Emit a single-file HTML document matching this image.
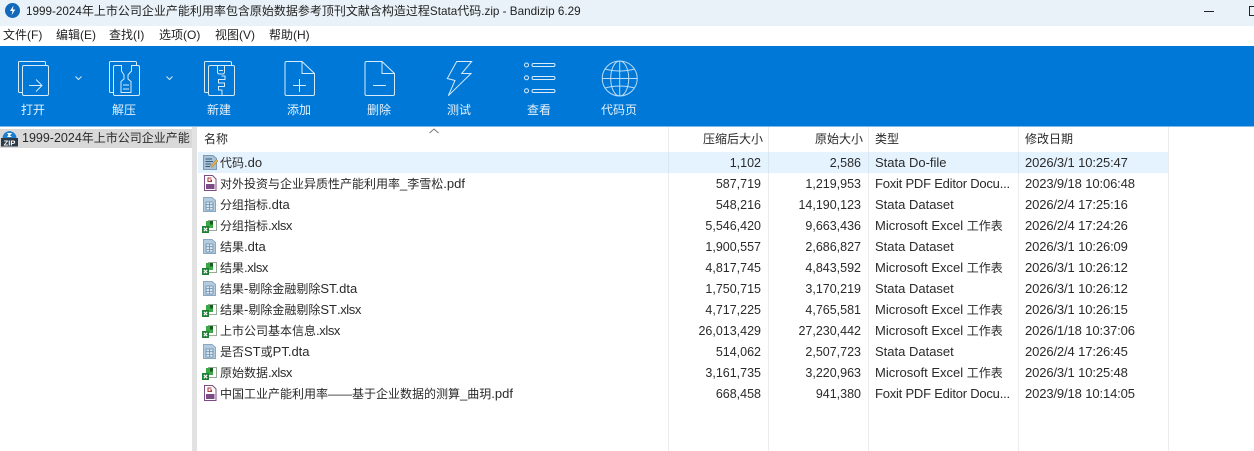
<!DOCTYPE html>
<html lang="zh"><head><meta charset="utf-8"><title>Bandizip</title>
<style>
html,body{margin:0;padding:0;background:#fff}
body{width:1254px;height:451px;overflow:hidden;position:relative;font-family:"Liberation Sans","Noto Sans CJK SC",sans-serif;font-size:13px;color:#2a2a2a}
.a{position:absolute;white-space:nowrap;line-height:18px}
.r{text-align:right}
.m{top:26px;font-size:12px;color:#222}
.t{color:#e4f1fb;top:101px;font-size:12px;text-align:center;width:70px}
.h{top:130px;font-size:12px}
i{font-style:normal;font-size:12px}
u{text-decoration:none;font-size:11.7px}
s{text-decoration:none;letter-spacing:-.4px}
.n{font-size:12.5px;width:92px;text-align:right}
.d{font-size:13px;letter-spacing:-.12px;left:1025px}
.f{letter-spacing:-.22px}
.y{left:875px}
.q{left:220px}
svg{position:absolute;overflow:visible}
.w{fill:none;stroke:#d8ebf9;stroke-width:1}
.vl{position:absolute;top:127px;height:324px;width:1px;background:#ececec}
</style></head><body>
<svg width="0" height="0" style="position:absolute"><defs>
<g id="do"><path d="M.5 .5H10L13.500 3.500V14.500H.5Z" fill="#a9c2d8" stroke="#7d9ab5"/><path d="M2.500 4H9M2.500 6.500H10M2.500 9H8M2.500 11.500H7" stroke="#35597a"/><path d="M7.500 11L13.500 4.500L15 6L9 12.500Z" fill="#e6b04c" stroke="#8f7330" stroke-width=".5"/></g>
<g id="pdf"><path d="M.5 .5H8.500L12 4V15.500H.5Z" fill="#fff" stroke="#7c4a84"/><path d="M7.500 3H4V6.500H7.500V5H6" fill="none" stroke="#a83a3a" stroke-width="1.100"/><rect x="2" y="9" width="8.500" height="5" fill="#7c4a84"/></g>
<g id="dta"><path d="M.5 .5H9L12.500 3.500V14.500H.5Z" fill="#b5cbdf" stroke="#8ba8c2"/><path d="M3 5H10V13H3ZM3 7.700H10M3 10.400H10M6.500 5V13" fill="#dbe7f1" stroke="#6a8fae" stroke-width=".8"/></g>
<g id="xl"><rect x="6.500" y="1.500" width="8" height="10" fill="#fff" stroke="#9aa89a"/><rect x="4" y="2" width="7" height="7" fill="#3aa845"/><path d="M8 2H11V5.500H8Z" fill="#145c1f"/><rect x="0" y="7" width="7" height="7" fill="#1e7e34"/><path d="M1.800 8.800L5.200 12.200M5.200 8.800L1.800 12.200" stroke="#fff" stroke-width="1.100"/></g>
</defs></svg>

<!-- Title bar -->
<div class="a" style="left:0;top:0;width:1254px;height:26px;background:#e9f2f8"></div>
<svg style="left:5px;top:3px" width="15" height="15" viewBox="0 0 15 15"><circle cx="7.500" cy="7.500" r="7.500" fill="#1268bd"/><path d="M8.500 2.500L5 8H7.500L6.500 12.500L10.300 6.500H7.800Z" fill="#fff"/></svg>
<div class="a" style="left:26px;top:2px;font-size:12px;color:#222"><u>1999-2024</u>年上市公司企业产能利用率包含原始数据参考顶刊文献含构造过程<u>Stata</u>代码<u>.zip - Bandizip 6.29</u></div>
<div class="a" style="left:1204px;top:11px;width:10px;height:1px;background:#222"></div>
<div class="a" style="left:1249px;top:6px;width:8px;height:8px;border:1px solid #222"></div>

<!-- Menu -->
<div class="a m" style="left:3px">文件(F)</div>
<div class="a m" style="left:56px">编辑(E)</div>
<div class="a m" style="left:109px">查找(I)</div>
<div class="a m" style="left:159px">选项(O)</div>
<div class="a m" style="left:215px">视图(V)</div>
<div class="a m" style="left:269px">帮助(H)</div>

<!-- Toolbar -->
<div class="a" style="left:0;top:46px;width:1254px;height:80px;background:#0078d7"></div>
<div class="a" style="left:0;top:126px;width:1254px;height:1px;background:#7fb9e8"></div>

<svg style="left:0;top:0" width="1254" height="127" viewBox="0 0 1254 127" class="w">
<!-- open -->
<path d="M22.500 92.500H19.500Q18.500 92.500 18.500 91.500V62.500Q18.500 61.500 19.500 61.500H44Q45.500 61.500 45.500 62.500V65.500"/>
<rect x="22.500" y="65.500" width="26" height="30" rx="1.500"/>
<path d="M29 85.500H42M36 79.500L42 85.500L36 91.500"/>
<path d="M75.500 76.500L78.500 79.500L81.500 76.500"/>
<!-- extract -->
<path d="M113.500 92.500H110.500Q109.500 92.500 109.500 91.500V62.500Q109.500 61.500 110.500 61.500H135Q136.500 61.500 136.500 62.500V65.500"/>
<path d="M121.500 65.500H115Q113.500 65.500 113.500 67V94Q113.500 95.500 115 95.500H138Q139.500 95.500 139.500 94V67Q139.500 65.500 138 65.500H131.500V71L128 75V79L131 81.500V92.500H121V81.500L124 79V75L121.500 71Z"/>
<path d="M123 85H129M123 89H129"/>
<path d="M166.500 76.500L169.500 79.500L172.500 76.500"/>
<!-- new -->
<path d="M208.500 92.500H205.500Q204.500 92.500 204.500 91.500V62.500Q204.500 61.500 205.500 61.500H230Q231.500 61.500 231.500 62.500V65.500"/>
<rect x="208.500" y="65.500" width="26" height="30" rx="1.500"/>
<path d="M217.500 65.500V72Q217.500 74 219.500 74H222.500Q224.500 74 224.500 72V65.500M219 70.500H223M221.500 76H225V79.500H218.500V83H224.500V86.500H218.500V90H222V95"/>
<!-- add -->
<path d="M286.500 61.500H302L314.500 73.500V94Q314.500 95.500 313 95.500H286.500Q285 95.500 285 94V63Q285 61.500 286.500 61.500ZM302 61.500V73.500H314.500"/>
<path d="M293 85.500H306M299.500 79V92"/>
<!-- delete -->
<path d="M366.500 61.500H382L394.500 73.500V94Q394.500 95.500 393 95.500H366.500Q365 95.500 365 94V63Q365 61.500 366.500 61.500ZM382 61.500V73.500H394.500"/>
<path d="M373 85.500H386"/>
<!-- test -->
<path d="M456.700 61.500H471.700L461.700 73.500H471L448.300 95.700L455 80.500L447.300 78.500Z"/>
<!-- view -->
<circle cx="526.500" cy="65" r="2"/><circle cx="526.500" cy="77.800" r="2"/><circle cx="526.500" cy="90.800" r="2"/>
<rect x="532" y="63.500" width="23" height="3" rx="1.500"/><rect x="532" y="76.500" width="23" height="3" rx="1.500"/><rect x="532" y="89.500" width="23" height="3" rx="1.500"/>
<!-- codepage -->
<g stroke="#b9dcf6"><circle cx="619.700" cy="78.500" r="17.500"/><ellipse cx="619.700" cy="78.500" rx="9" ry="17.500"/><path d="M619.700 61V96M602.200 78.500H637.200M605 69Q619.700 73 634.500 69M605 88Q619.700 84 634.500 88"/></g>
</svg>

<div class="a t" style="left:-2px">打开</div>
<div class="a t" style="left:89px">解压</div>
<div class="a t" style="left:184px">新建</div>
<div class="a t" style="left:264px">添加</div>
<div class="a t" style="left:344px">删除</div>
<div class="a t" style="left:424px">测试</div>
<div class="a t" style="left:504px">查看</div>
<div class="a t" style="left:584px">代码页</div>

<!-- Sidebar -->
<div class="a" style="left:0;top:129px;width:192px;height:19px;background:#d9d9d9"></div>
<div class="a" style="left:192px;top:127px;width:5px;height:324px;background:#e2e2e2"></div>
<svg style="left:1px;top:130px" width="17" height="17" viewBox="0 0 17 17"><path d="M1.500 8Q2 2 8.500 1Q15 2 15.500 8Z" fill="#1b7fd0"/><path d="M6 3H11L9 5.500L11 7H6L7.500 5Z" fill="#fff"/><rect x="0" y="8" width="17" height="8.500" fill="#2c3a48"/><text x="8.500" y="15.300" font-size="7.500" font-weight="bold" fill="#fff" text-anchor="middle" font-family="Liberation Sans">ZIP</text></svg>
<div class="a" style="left:22px;top:129px;width:169px;overflow:hidden;font-size:12.5px">1999-2024<i>年上市公司企业产能</i></div>

<!-- Header -->
<div class="vl" style="left:668px"></div>
<div class="vl" style="left:768px"></div>
<div class="vl" style="left:868px"></div>
<div class="vl" style="left:1018px"></div>
<div class="vl" style="left:1168px"></div>
<div class="a h" style="left:204px">名称</div>
<svg style="left:429px;top:128px" width="11" height="6"><path d="M.5 5L5 1L9.500 5" fill="none" stroke="#777"/></svg>
<div class="a r h" style="left:669px;width:94px">压缩后大小</div>
<div class="a r h" style="left:769px;width:94px">原始大小</div>
<div class="a h" style="left:875px">类型</div>
<div class="a h" style="left:1025px">修改日期</div>

<div class="a" style="left:198px;top:152px;width:970px;height:21px;background:#e5f3ff"></div>
<div class="vl" style="left:668px;top:152px;height:21px;background:#d8e6f2"></div>
<div class="vl" style="left:768px;top:152px;height:21px;background:#d8e6f2"></div>
<div class="vl" style="left:868px;top:152px;height:21px;background:#d8e6f2"></div>
<div class="vl" style="left:1018px;top:152px;height:21px;background:#d8e6f2"></div>

<!-- Row 1 -->
<svg style="left:203px;top:155px" width="17" height="17"><use href="#do"/></svg>
<div class="a q" style="top:154px"><i>代码</i>.do</div><div class="a n" style="left:669px;top:154px">1,102</div><div class="a n" style="left:769px;top:154px">2,586</div><div class="a y" style="top:154px">Stata Do-file</div><div class="a d" style="top:154px">2026/3/1 10:25:47</div>
<!-- Row 2 -->
<svg style="left:204px;top:175px" width="17" height="17"><use href="#pdf"/></svg>
<div class="a q" style="top:175px"><i>对外投资与企业异质性产能利用率</i>_<i>李雪松</i>.pdf</div><div class="a n" style="left:669px;top:175px">587,719</div><div class="a n" style="left:769px;top:175px">1,219,953</div><div class="a y f" style="top:175px">Foxit PDF Editor Docu...</div><div class="a d" style="top:175px">2023/9/18 10:06:48</div>
<!-- Row 3 -->
<svg style="left:203px;top:197px" width="17" height="17"><use href="#dta"/></svg>
<div class="a q" style="top:196px"><i>分组指标</i>.dta</div><div class="a n" style="left:669px;top:196px">548,216</div><div class="a n" style="left:769px;top:196px">14,190,123</div><div class="a y" style="top:196px">Stata Dataset</div><div class="a d" style="top:196px">2026/2/4 17:25:16</div>
<!-- Row 4 -->
<svg style="left:202px;top:219px" width="17" height="17"><use href="#xl"/></svg>
<div class="a q" style="top:217px"><i>分组指标</i><s>.xlsx</s></div><div class="a n" style="left:669px;top:217px">5,546,420</div><div class="a n" style="left:769px;top:217px">9,663,436</div><div class="a y" style="top:217px">Microsoft Excel <i>工作表</i></div><div class="a d" style="top:217px">2026/2/4 17:24:26</div>
<!-- Row 5 -->
<svg style="left:203px;top:239px" width="17" height="17"><use href="#dta"/></svg>
<div class="a q" style="top:238px"><i>结果</i>.dta</div><div class="a n" style="left:669px;top:238px">1,900,557</div><div class="a n" style="left:769px;top:238px">2,686,827</div><div class="a y" style="top:238px">Stata Dataset</div><div class="a d" style="top:238px">2026/3/1 10:26:09</div>
<!-- Row 6 -->
<svg style="left:202px;top:261px" width="17" height="17"><use href="#xl"/></svg>
<div class="a q" style="top:259px"><i>结果</i><s>.xlsx</s></div><div class="a n" style="left:669px;top:259px">4,817,745</div><div class="a n" style="left:769px;top:259px">4,843,592</div><div class="a y" style="top:259px">Microsoft Excel <i>工作表</i></div><div class="a d" style="top:259px">2026/3/1 10:26:12</div>
<!-- Row 7 -->
<svg style="left:203px;top:281px" width="17" height="17"><use href="#dta"/></svg>
<div class="a q" style="top:280px"><i>结果</i>-<i>剔除金融剔除</i>ST.dta</div><div class="a n" style="left:669px;top:280px">1,750,715</div><div class="a n" style="left:769px;top:280px">3,170,219</div><div class="a y" style="top:280px">Stata Dataset</div><div class="a d" style="top:280px">2026/3/1 10:26:12</div>
<!-- Row 8 -->
<svg style="left:202px;top:303px" width="17" height="17"><use href="#xl"/></svg>
<div class="a q" style="top:301px"><i>结果</i>-<i>剔除金融剔除</i>ST<s>.xlsx</s></div><div class="a n" style="left:669px;top:301px">4,717,225</div><div class="a n" style="left:769px;top:301px">4,765,581</div><div class="a y" style="top:301px">Microsoft Excel <i>工作表</i></div><div class="a d" style="top:301px">2026/3/1 10:26:15</div>
<!-- Row 9 -->
<svg style="left:202px;top:324px" width="17" height="17"><use href="#xl"/></svg>
<div class="a q" style="top:322px"><i>上市公司基本信息</i><s>.xlsx</s></div><div class="a n" style="left:669px;top:322px">26,013,429</div><div class="a n" style="left:769px;top:322px">27,230,442</div><div class="a y" style="top:322px">Microsoft Excel <i>工作表</i></div><div class="a d" style="top:322px">2026/1/18 10:37:06</div>
<!-- Row 10 -->
<svg style="left:203px;top:344px" width="17" height="17"><use href="#dta"/></svg>
<div class="a q" style="top:343px"><i>是否</i>ST<i>或</i>PT.dta</div><div class="a n" style="left:669px;top:343px">514,062</div><div class="a n" style="left:769px;top:343px">2,507,723</div><div class="a y" style="top:343px">Stata Dataset</div><div class="a d" style="top:343px">2026/2/4 17:26:45</div>
<!-- Row 11 -->
<svg style="left:202px;top:366px" width="17" height="17"><use href="#xl"/></svg>
<div class="a q" style="top:364px"><i>原始数据</i><s>.xlsx</s></div><div class="a n" style="left:669px;top:364px">3,161,735</div><div class="a n" style="left:769px;top:364px">3,220,963</div><div class="a y" style="top:364px">Microsoft Excel <i>工作表</i></div><div class="a d" style="top:364px">2026/3/1 10:25:48</div>
<!-- Row 12 -->
<svg style="left:204px;top:385px" width="17" height="17"><use href="#pdf"/></svg>
<div class="a q" style="top:385px"><i>中国工业产能利用率——基于企业数据的测算</i>_<i>曲玥</i>.pdf</div><div class="a n" style="left:669px;top:385px">668,458</div><div class="a n" style="left:769px;top:385px">941,380</div><div class="a y f" style="top:385px">Foxit PDF Editor Docu...</div><div class="a d" style="top:385px">2023/9/18 10:14:05</div>
</body></html>
